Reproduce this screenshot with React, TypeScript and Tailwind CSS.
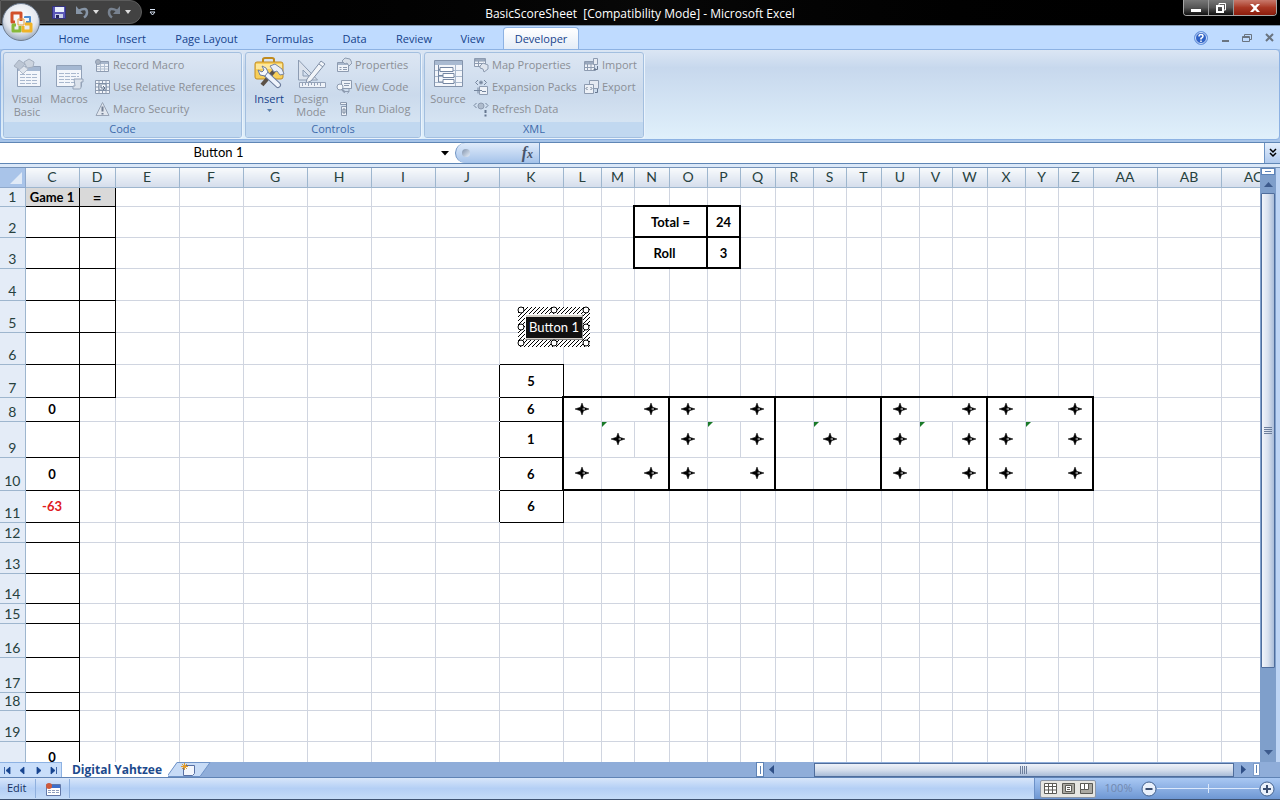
import type { ReactNode } from "react";
import { clsx } from "clsx";

const TABS = [
  { label: "Home", width: "w-[60px]" },
  { label: "Insert", width: "w-[54px]" },
  { label: "Page Layout", width: "w-[97px]" },
  { label: "Formulas", width: "w-[69px]" },
  { label: "Data", width: "w-[61px]" },
  { label: "Review", width: "w-[58px]" },
  { label: "View", width: "w-[59px]" },
];

const COLUMNS: [string, number][] = [
  ["C", 54], ["D", 36], ["E", 64], ["F", 64], ["G", 64], ["H", 64], ["I", 64], ["J", 64], ["K", 64],
  ["L", 38], ["M", 33], ["N", 35], ["O", 38], ["P", 33], ["Q", 35], ["R", 38], ["S", 33], ["T", 35],
  ["U", 38], ["V", 33], ["W", 35], ["X", 38], ["Y", 33], ["Z", 35], ["AA", 64], ["AB", 64], ["AC", 64],
];

const ROW_HEIGHTS = [19, 31, 31, 32, 32, 32, 33, 24, 36, 33, 32, 20, 31, 30, 20, 34, 35, 18, 31, 32];

const VALUES: Record<string, string> = {
  C1: "Game 1", D1: "=", C8: "0", C10: "0", C11: "-63", C20: "0",
  N2: "Total =", P2: "24", N3: "Roll", P3: "3",
  K7: "5", K8: "6", K9: "1", K10: "6", K11: "6",
};

const PIPS = new Set([
  "L8", "N8", "M9", "L10", "N10",
  "O8", "Q8", "O9", "Q9", "O10", "Q10",
  "S9",
  "U8", "W8", "U9", "W9", "U10", "W10",
  "X8", "Z8", "X9", "Z9", "X10", "Z10",
]);

const DICE_COLUMNS = "LMNOPQRSTUVWXYZ";

function isDieColumn(col: string) {
  return col.length === 1 && DICE_COLUMNS.includes(col);
}

function rightBorder(col: string, row: number) {
  if (col === "C" || (col === "D" && row <= 7)) return "border-r border-r-black";
  if (col === "J" && row >= 7 && row <= 11) return "border-r border-r-black";
  if (col === "K" && (row === 7 || row === 11)) return "border-r border-r-black";
  if (["K", "N", "Q", "T", "W", "Z"].includes(col) && row >= 8 && row <= 10) return "border-r-2 border-r-black";
  if (["M", "N", "P"].includes(col) && (row === 2 || row === 3)) return "border-r-2 border-r-black";
  if (["M", "P", "V", "Y"].includes(col) && (row === 8 || row === 10)) return "border-r-0";
  return "border-r border-r-[#d0d5e0]";
}

function bottomBorder(col: string, row: number) {
  if (col === "C" || (col === "D" && row <= 7)) return "border-b border-b-black";
  if (col === "K" && row >= 6 && row <= 11) return "border-b border-b-black";
  if (isDieColumn(col) && (row === 7 || row === 10)) return "border-b-2 border-b-black";
  if (["N", "O", "P"].includes(col) && row >= 1 && row <= 3) return "border-b-2 border-b-black";
  return "border-b border-b-[#d0d5e0]";
}

function Pip() {
  return (
    <svg className="mx-auto block" width="14" height="12" viewBox="0 0 14 12">
      <path d="M7 0 8.500 4.200 14 6 8.500 7.800 7 12 5.500 7.800 0 6 5.500 4.200Z" fill="#000" stroke="#000" strokeWidth=".5" />
      <path d="M7.600 5.500h2.400v1H7.600z" fill="#fff" />
    </svg>
  );
}

function Cell({ col, row }: { col: string; row: number }) {
  const id = `${col}${row}`;
  const merged = col === "N" && (row === 2 || row === 3);
  const flagged = row === 9 && ["M", "P", "S", "V", "Y"].includes(col);
  return (
    <td
      colSpan={merged ? 2 : 1}
      className={clsx(
        "relative p-0 text-center align-middle leading-4 font-bold whitespace-nowrap",
        rightBorder(col, row),
        bottomBorder(col, row),
        row === 1 && (col === "C" || col === "D") && "bg-[#d9d9d9]",
        row === 3 && col === "N" && "pr-3",
        id === "D1" ? "text-[15px]" : "text-[13px]",
        id === "C11" ? "text-[#e01b22]" : "text-black",
      )}
    >
      {flagged && <span className="absolute top-0 left-0 border-t-[5px] border-r-[5px] border-t-[#1a7a28] border-r-transparent" />}
      {PIPS.has(id) ? <Pip /> : VALUES[id]}
    </td>
  );
}

function Sheet() {
  return (
    <div className="relative h-[594px] min-w-0 flex-1 overflow-hidden bg-white">
      <table className="w-[1285px] table-fixed border-collapse font-[Lato,sans-serif]">
        <colgroup>
          <col className="w-[25px]" />
          {COLUMNS.map(([name, width]) => (
            <col key={name} style={{ width }} />
          ))}
        </colgroup>
        <thead>
          <tr className="h-[19px]">
            <th className="border-r border-b border-[#8fa9cc] bg-[#a9c4e9] p-0 align-bottom">
              <svg className="mb-[3px] ml-[10px] block" width="12" height="12" viewBox="0 0 12 12">
                <path d="M12 0v12H0z" fill="#e0eaf7" />
              </svg>
            </th>
            {COLUMNS.map(([name]) => (
              <th
                key={name}
                className="border-r border-b border-[#9eb6ce] bg-linear-to-b from-[#f8fafc] to-[#d5deec] p-0 text-[14px] leading-[18px] font-normal text-[#27413e]"
              >
                {name}
              </th>
            ))}
          </tr>
        </thead>
        <tbody>
          {ROW_HEIGHTS.map((height, i) => (
            <tr key={i} style={{ height }}>
              <th className="border-r border-b border-[#9eb6ce] bg-[#e4ecf7] p-0 pb-px align-bottom text-[14px] leading-4 font-normal text-[#27413e]">
                {i < 19 ? i + 1 : ""}
              </th>
              {COLUMNS.filter(([col]) => !(col === "O" && (i === 1 || i === 2))).map(([col]) => (
                <Cell key={col} col={col} row={i + 1} />
              ))}
            </tr>
          ))}
        </tbody>
      </table>
      <SelectedButton />
    </div>
  );
}

function SelectedButton() {
  const handles = [[4, 4], [37, 4], [69, 4], [4, 21], [69, 21], [4, 37], [37, 37], [69, 37]];
  return (
    <div className="absolute top-[138px] left-[517px] h-[42px] w-[74px]">
      <svg className="absolute inset-0" width="74" height="42">
        <defs>
          <pattern id="hatch" width="4" height="4" patternUnits="userSpaceOnUse">
            <path d="M-1 5 5-1M-1 1 1-1M3 5 5 3" stroke="#000" strokeWidth="1" />
          </pattern>
        </defs>
        <path d="M1 1h72v40H1zM8 8v26h58V8z" fill="#fff" fillRule="evenodd" />
        <path d="M1 1h72v40H1zM8 8v26h58V8z" fill="url(#hatch)" fillRule="evenodd" />
      </svg>
      <button className="absolute top-2 left-2 h-[26px] w-[58px] border border-t-white border-r-[#888] border-b-[#888] border-l-white bg-[#d4d0c8] font-[Lato,sans-serif] text-[13px] leading-5 whitespace-nowrap text-white">
        <span className="block h-[21px] bg-[#111]">Button 1</span>
      </button>
      <svg className="absolute inset-0" width="74" height="42">
        {handles.map(([x, y]) => (
          <circle key={`${x}-${y}`} cx={x} cy={y} r="3" fill="#fff" stroke="#000" />
        ))}
      </svg>
    </div>
  );
}

function SmallIcon({ children }: { children: ReactNode }) {
  return (
    <svg className="shrink-0" width="16" height="16" viewBox="0 0 16 16" fill="none" stroke="#8d9bb0">
      {children}
    </svg>
  );
}

function SmallButton({ icon, label }: { icon: ReactNode; label: string }) {
  return (
    <button className="flex h-[22px] items-center gap-[3px] text-[11px] leading-4 whitespace-nowrap text-[#8b8f96]">
      <SmallIcon>{icon}</SmallIcon>
      {label}
    </button>
  );
}

function BigButton({ icon, label, className }: { icon: ReactNode; label: ReactNode; className: string }) {
  return (
    <button className={clsx("flex shrink-0 flex-col items-center pt-[3px] text-[11px] leading-[13px]", className)}>
      <svg className="mb-[2px]" width="32" height="34" viewBox="0 0 32 34" fill="none">
        {icon}
      </svg>
      {label}
    </button>
  );
}

function Group({ title, className, children }: { title: string; className: string; children: ReactNode }) {
  return (
    <section
      className={clsx(
        "flex flex-col overflow-hidden rounded-[3px] border border-[#a3bfdf] bg-linear-to-b from-[#dce6f3] via-[#cbdaec] to-[#dbe9f6] shadow-[1px_1px_0_#eaf3fc]",
        className,
      )}
    >
      <div className="flex flex-1">{children}</div>
      <h2 className="h-[15px] bg-[#c1d8f0] text-center text-[11px] leading-[14px] text-[#3e6aaa]">{title}</h2>
    </section>
  );
}

const windowIcon = (
  <>
    <path d="M6.500 10.500h23v20h-23z" fill="#f3f6fb" stroke="#91a1b8" />
    <path d="M7 11h22v4H7z" fill="#a5b8d2" />
    <path d="M9 18.500h18M9 21.500h18M9 24.500h18M9 27.500h18" stroke="#a9b8ce" strokeDasharray="5 1" />
  </>
);

const visualBasicIcon = (
  <>
    {windowIcon}
    <path d="m3 10 5-6 6 4-5 6z" fill="#bcc6d4" stroke="#a5b0c0" />
    <path d="m13 6 5-3 5 3-1 5-6 1z" fill="#ccd4df" stroke="#a5b0c0" />
    <path d="m8 14 5-4 4 3-5 5z" fill="#dfe5ed" stroke="#b2bccb" />
  </>
);

const macrosIcon = (
  <>
    <path d="M3.500 9.500h25v21h-25z" fill="#f3f6fb" stroke="#91a1b8" />
    <path d="M4 10h24v4H4z" fill="#a5b8d2" />
    <path d="M6 17.500h20M6 20.500h20M6 23.500h20M6 26.500h20" stroke="#a9b8ce" strokeDasharray="5 1" />
    <path d="M21 23h9v3h-2v5c0 2-1 2-3 2h-5v-3h2z" fill="#dbe2ec" stroke="#95a3b8" />
  </>
);

const toolboxIcon = (
  <>
    <path d="M10 6V3.500Q10 2 12 2h7q2 0 2 1.500V6" stroke="#c08a1d" strokeWidth="2" />
    <path d="M2 8q0-2 2-2h24q2 0 2 2v13q0 2-2 2H4q-2 0-2-2z" fill="#f8cf59" stroke="#c18c24" />
    <path d="M3 8h26v5H3z" fill="#fde79b" />
    <path d="M21 15 9 29" stroke="#5b5147" strokeWidth="4" />
    <path d="m17 10 5-2 7 5 2 5-4 1-3-4-3 1z" fill="#e9eef7" stroke="#7885a1" />
    <path d="m12 17 13 12" stroke="#6c7c9c" strokeWidth="6" strokeLinecap="round" />
    <path d="m11 16 14 13" stroke="#eef3fb" strokeWidth="4" strokeLinecap="round" />
    <path d="m9 10 4 2 2 4-3 4-5-1-2-5 4 2 2-2z" fill="#f7f9fd" stroke="#6c7c9c" />
  </>
);

const designIcon = (
  <>
    <path d="M3.500 4v20h19zM8 14v6h6z" fill="#dce3ed" fillRule="evenodd" stroke="#8d9cb2" />
    <path d="M12 23 26 5l4 3-14 17-5 2z" fill="#f2f5f9" stroke="#8190a7" />
    <path d="m24 8 4 3" stroke="#8190a7" />
    <path d="M4.500 26.500h26v5h-26z" fill="#eef2f8" stroke="#94a2b8" />
    <path d="M7.500 27v3M10.500 27v2M13.500 27v3M16.500 27v2M19.500 27v3M22.500 27v2M25.500 27v3" stroke="#94a2b8" />
  </>
);

const sourceIcon = (
  <>
    <path d="M2.500 4.500h28v26h-28z" fill="#f2f5fa" stroke="#8393ab" />
    <path d="M3 5h27v4H3z" fill="#a9bad1" />
    <path d="M23.500 9v21M3 14.500h27M3 20.500h27M3 26.500h27" stroke="#a9b8cc" />
    <path d="M8 11.500h13v4H8zM11 17.500h11v4H11zM11 23.500h11v4H11z" fill="#fff" stroke="#7486a2" />
    <path d="M6.500 9v17H11M6.500 19.500H11M6.500 13.500H8" stroke="#7486a2" />
  </>
);

const sheetGlyph = (
  <>
    <path d="M2.500 4.500h12v10h-12z" fill="#eff3f9" />
    <path d="M3 5h11v2H3z" fill="#a8b7cc" stroke="none" />
    <path d="M3 9.500h11M3 12h11M6.500 7v7M10.500 7v7" stroke="#b1bfd1" />
  </>
);

const icons = {
  record: (
    <>
      {sheetGlyph}
      <circle cx="4" cy="5" r="2.500" fill="#a9b3c2" />
    </>
  ),
  relative: (
    <>
      <path d="M1.500 1.500h14v13h-14zM1 4.500h15M1 8h15M1 11.500h15M5 1v14M8.500 1v14M12 1v14" fill="#f2f5fa" />
      <path d="M5 5h7v6H5z" fill="#f8fafd" stroke="#74859d" />
      <path d="M7 6v3h4M9 7l2 2-2 2" stroke="#5f7089" />
    </>
  ),
  security: (
    <>
      <path d="M8.500 1.500 15 14.500H2z" fill="#dfe5ed" stroke="#98a4b6" />
      <path d="M8.500 5.500v5M8.500 12v1.500" stroke="#707d92" strokeWidth="2" />
    </>
  ),
  properties: (
    <>
      <path d="M1.500 5.500h11v9h-11z" fill="#eff3f9" />
      <path d="M2 6h10v2H2z" fill="#a8b7cc" stroke="none" />
      <path d="M3.500 10.500h2M7 10.500h4M3.500 12.500h2M7 12.500h4" />
      <path d="m6 4 3-3 5 1 2 4-3 3-2-3-2 1z" fill="#d7dfe9" />
    </>
  ),
  code: (
    <>
      <path d="M5.500 1.500h10v8h-10z" fill="#eef2f8" />
      <path d="M8 4.500h6M8 6.500h5M8 12.500h5l-1.500 2M13 10v2.500" />
      <circle cx="4" cy="8" r="3" fill="#f4f7fb" />
      <path d="m6 10.500 3 3" strokeWidth="2" />
    </>
  ),
  dialog: (
    <>
      <path d="M4.500 1.500h6v2h-6zM5.500 5.500h5v9h-5z" fill="#edf1f7" />
      <path d="M10.500 2v11M7 8h2v4H7z" stroke="#77879d" />
    </>
  ),
  map: (
    <>
      <path d="M1.500 1.500h11v8h-11z" fill="#eff3f9" />
      <path d="M2 2h10v2H2zM1 6.500h11M5.500 4v5" fill="#a8b7cc" />
      <path d="m7 9 3-3 5 2v4l-4 3-1-3-3-1z" fill="#dfe5ee" />
    </>
  ),
  expansion: (
    <>
      <path d="M5 1 2.500 3.500 5 6M11 1l2.500 2.500L11 6" stroke="#76879f" />
      <circle cx="8" cy="3.500" r="1.500" fill="#76879f" />
      <path d="M6.500 7.500h8v8h-8z" fill="#edf1f7" />
      <path d="M1 11.500h8M5 8.500v6M9 12.500h4" stroke="#74859d" />
    </>
  ),
  refresh: (
    <>
      <path d="M3.500 2 1 4.500 3.500 7M12.500 2 15 4.500 12.500 7" stroke="#76879f" />
      <circle cx="8" cy="5" r="3" fill="#afbccd" />
      <path d="M12.500 9v3M12.500 13.500v2" stroke="#65768f" strokeWidth="2" />
    </>
  ),
  importXml: (
    <>
      <path d="M1.500 4.500h10v9h-10z" fill="#eff3f9" />
      <path d="M2 5h9v2H2zM2 10.500h9M4.500 7v6M8 7v6" fill="#a8b7cc" />
      <path d="M10.500 1.500h4v6h-4z" fill="#e5eaf2" />
      <path d="M14.500 9v3.500H11M12.500 11 11 12.500l1.500 1.500" stroke="#66778f" />
    </>
  ),
  exportXml: (
    <>
      <path d="M6.500 1.500h9v8h-9z" fill="#e5eaf2" />
      <path d="M1.500 5.500h9v9h-9z" fill="#edf1f7" />
      <path d="M4.500 8 3 9.500 4.500 11M7.500 8 9 9.500 7.500 11M14.500 10v3.500H12" stroke="#66778f" />
    </>
  ),
};

function OfficeOrb() {
  return (
    <button aria-label="Office Button" className="absolute top-[2px] left-[1px] z-10">
      <svg width="40" height="40" viewBox="0 0 40 40" fill="none">
        <defs>
          <radialGradient id="orb" cx=".5" cy=".35" r=".65">
            <stop offset="0" stopColor="#fff" />
            <stop offset=".65" stopColor="#e3e7ee" />
            <stop offset="1" stopColor="#9aa9bd" />
          </radialGradient>
        </defs>
        <circle cx="20" cy="20" r="18.500" fill="url(#orb)" stroke="#6f7d90" />
        <g strokeWidth="3" strokeLinejoin="round">
          <path d="M14 20h-3v-9h9v8" stroke="#d2502a" />
          <path d="M24 16v-1h5v5h-4" stroke="#4d8dd0" strokeWidth="2" />
          <path d="M15 23h-3v6h7v-5" stroke="#87b93a" />
          <path d="M22 24v5h8v-7h-6" stroke="#f0b326" />
        </g>
        <path d="M17 17h6v6h-6z" stroke="#e6a03c" strokeWidth="1" />
      </svg>
    </button>
  );
}

function TitleBar() {
  return (
    <header className="flex h-[25px] items-start justify-between bg-linear-to-r from-black via-[#080808] to-black">
      <div className="flex w-[242px] items-center">
        <div className="flex h-6 w-[142px] items-center gap-[8px] rounded-r-full border border-[#5c5c5c] bg-[#424242] pl-[50px]">
          <button aria-label="Save">
            <svg className="block" width="16" height="16" viewBox="0 0 16 16">
              <path d="M1.500 2.500h13v12h-13z" fill="#5a57b8" stroke="#34327d" />
              <path d="M4 3h9v5H4z" fill="#e9f0fc" />
              <path d="M4 10h8v4H4z" fill="#c8cfe8" />
              <path d="M5 11h3v3H5z" fill="#27265f" />
            </svg>
          </button>
          <button aria-label="Undo" className="flex items-center gap-1">
            <svg width="14" height="14" viewBox="0 0 14 14">
              <path d="M4 5.500q8-4 8 2 0 3-3 5" fill="none" stroke="#8795a6" strokeWidth="2.500" />
              <path d="M1 1v8h7z" fill="#8795a6" />
            </svg>
            <svg width="6" height="4" viewBox="0 0 6 4"><path d="M0 0h6L3 4z" fill="#ddd" /></svg>
          </button>
          <button aria-label="Redo" className="flex items-center gap-1">
            <svg width="14" height="14" viewBox="0 0 14 14">
              <path d="M10 5.500q-8-4-8 2 0 3 3 5" fill="none" stroke="#78828f" strokeWidth="2.500" />
              <path d="M13 1v8H6z" fill="#78828f" />
            </svg>
            <svg width="6" height="4" viewBox="0 0 6 4"><path d="M0 0h6L3 4z" fill="#ddd" /></svg>
          </button>
        </div>
        <button aria-label="Customize Quick Access Toolbar" className="ml-[7px]">
          <svg className="block" width="7" height="7" viewBox="0 0 7 7">
            <path d="M1 .5h5M1 3h5L3.500 6z" fill="none" stroke="#d8e4f5" />
          </svg>
        </button>
      </div>
      <h1 className="pt-[6px] text-[12px] leading-4 whitespace-pre text-white">
        BasicScoreSheet  [Compatibility Mode] - Microsoft Excel
      </h1>
      <div className="flex w-[242px] justify-end pr-[3px]">
        <div className="flex h-4 overflow-hidden rounded-b-[4px] border border-t-0 border-[#a6a6a6]">
          <button aria-label="Minimize" className="flex w-[25px] items-center justify-center border-r border-[#999] bg-linear-to-b from-[#777] via-[#555] to-[#111]">
            <svg width="12" height="10" viewBox="0 0 12 10"><path d="M1 6h10v3H1z" fill="#fff" /></svg>
          </button>
          <button aria-label="Restore" className="flex w-[25px] items-center justify-center border-r border-[#999] bg-linear-to-b from-[#777] via-[#555] to-[#111]">
            <svg width="12" height="12" viewBox="0 0 12 12" fill="none" stroke="#fff">
              <path d="M4 3V1.500h6.500V8H9" />
              <path d="M2 4h6v6H2z" strokeWidth="2" />
            </svg>
          </button>
          <button aria-label="Close" className="flex w-[42px] items-center justify-center bg-linear-to-b from-[#c8796b] via-[#a93824] to-[#8c1c0c]">
            <svg width="12" height="10" viewBox="0 0 12 10"><path d="M1 1h3l2 2 2-2h3L7.500 5 11 9H8L6 7 4 9H1l3.500-4z" fill="#fff" /></svg>
          </button>
        </div>
      </div>
    </header>
  );
}

function TabStrip() {
  return (
    <nav className="flex h-6 items-end border-t border-[#7f93a8] bg-[#bfdbff] pl-11 text-[11px] text-[#15428b]">
      <div className="flex">
        {TABS.map((tab) => (
          <button key={tab.label} className={clsx("h-[20px] text-center leading-4 whitespace-nowrap", tab.width)}>
            {tab.label}
          </button>
        ))}
      </div>
      <button className="-mb-px ml-[1px] h-[23px] w-[76px] rounded-t-[4px] border border-b-0 border-[#8db2e3] bg-linear-to-b from-white to-[#e3ecf7] leading-4">
        Developer
      </button>
      <div className="ml-auto flex items-center gap-[13px] self-center pr-[6px]">
        <button aria-label="Help">
          <svg className="block" width="14" height="14" viewBox="0 0 14 14">
            <circle cx="7" cy="7" r="6.500" fill="#2f62c6" stroke="#6f9be0" />
            <circle cx="7" cy="7" r="5.500" fill="none" stroke="#cfe0fa" />
            <path d="M5 5.500q0-2 2-2t2 1.700Q9 6.500 7 7.500v1M7 9.500V11" fill="none" stroke="#fff" strokeWidth="1.500" />
          </svg>
        </button>
        <button aria-label="Minimize workbook">
          <svg className="block" width="8" height="10" viewBox="0 0 8 10"><path d="M1 7h7v2H1z" fill="#6a7480" /></svg>
        </button>
        <button aria-label="Restore workbook">
          <svg className="block" width="10" height="8" viewBox="0 0 10 8" fill="none" stroke="#6a7480">
            <path d="M2.500 2V.5h7v5H8M.5 2.500h7v5h-7zM.5 3.500h7" />
          </svg>
        </button>
        <button aria-label="Close workbook">
          <svg className="block" width="9" height="9" viewBox="0 0 9 9"><path d="m1 1 7 7M8 1 1 8" stroke="#6a7480" strokeWidth="2" /></svg>
        </button>
      </div>
    </nav>
  );
}

function Ribbon() {
  return (
    <div className="flex h-[91px] gap-[3px] rounded-[4px] border border-[#8db2e3] bg-linear-to-b from-[#dbe6f4] from-0% via-[#c7d8ed] via-20% to-[#e0f0fb] px-[2px] pt-[2px] pb-px">
      <Group title="Code" className="w-[239px]">
        <BigButton className="w-[46px] text-[#8b8f96]" icon={visualBasicIcon} label={<>Visual<br />Basic</>} />
        <BigButton className="w-[38px] text-[#8b8f96]" icon={macrosIcon} label="Macros" />
        <div className="ml-[6px] pt-px">
          <SmallButton icon={icons.record} label="Record Macro" />
          <SmallButton icon={icons.relative} label="Use Relative References" />
          <SmallButton icon={icons.security} label="Macro Security" />
        </div>
      </Group>
      <Group title="Controls" className="w-[176px]">
        <BigButton
          className="w-[46px] text-[#15428b]"
          icon={toolboxIcon}
          label={
            <>
              Insert
              <svg className="mt-1" width="5" height="3" viewBox="0 0 5 3"><path d="M0 0h5L2.500 3z" fill="#567db1" /></svg>
            </>
          }
        />
        <BigButton className="w-[38px] text-[#8b8f96]" icon={designIcon} label={<>Design<br />Mode</>} />
        <div className="ml-[6px] pt-px">
          <SmallButton icon={icons.properties} label="Properties" />
          <SmallButton icon={icons.code} label="View Code" />
          <SmallButton icon={icons.dialog} label="Run Dialog" />
        </div>
      </Group>
      <Group title="XML" className="w-[220px]">
        <BigButton className="w-[46px] text-[#8b8f96]" icon={sourceIcon} label="Source" />
        <div className="ml-[2px] w-[104px] pt-px">
          <SmallButton icon={icons.map} label="Map Properties" />
          <SmallButton icon={icons.expansion} label="Expansion Packs" />
          <SmallButton icon={icons.refresh} label="Refresh Data" />
        </div>
        <div className="ml-[6px] pt-px">
          <SmallButton icon={icons.importXml} label="Import" />
          <SmallButton icon={icons.exportXml} label="Export" />
        </div>
      </Group>
    </div>
  );
}

function FormulaBar() {
  return (
    <div className="mt-[2px] flex h-[26px] border-b border-[#7592b8] bg-[#dbe8f8] pb-[3px]">
      <div className="flex flex-1 border-y border-[#5f86b5] bg-white">
        <input
          aria-label="Name Box"
          defaultValue="Button 1"
          className="w-[437px] bg-transparent text-center font-[Lato,sans-serif] text-[13px] text-black outline-none"
        />
        <button aria-label="Names" className="flex w-[18px] items-center pl-1">
          <svg width="8" height="5" viewBox="0 0 8 5"><path d="M0 0h8L4 4.500z" fill="#000" /></svg>
        </button>
        <div className="flex w-[85px] items-center justify-between rounded-l-full border-r border-l border-[#6d93c3] bg-linear-to-b from-[#e0ebfa] to-[#a5c3ea] pr-[6px] pl-[6px]">
          <span className="size-2 rounded-full bg-linear-to-br from-[#8294ad] to-[#e8f0fb]" />
          <button aria-label="Insert Function" className="font-['Liberation_Serif',serif] text-[16px] leading-4 font-bold text-[#46536a] italic">
            f<span className="text-[12px]">x</span>
          </button>
        </div>
        <input aria-label="Formula" className="min-w-0 flex-1 bg-white outline-none" />
        <button aria-label="Expand Formula Bar" className="flex w-4 items-center justify-center border-l border-[#6d93c3] bg-linear-to-b from-[#e5effc] to-[#b0caee]">
          <svg width="8" height="10" viewBox="0 0 8 10" fill="none" stroke="#000" strokeWidth="1.500">
            <path d="m1 1 3 3 3-3M1 5l3 3 3-3" />
          </svg>
        </button>
      </div>
    </div>
  );
}

function VerticalScrollbar() {
  return (
    <div className="flex w-5 border-r-4 border-[#bdd4f4] bg-[#7f9fcb]">
      <div className="flex w-full flex-col items-center">
        <div className="h-[7px] w-[14px] border border-[#5d83b8] bg-white"><div className="mx-[3px] mt-[2px] h-px bg-[#5d83b8]" /></div>
        <button aria-label="Scroll up" className="h-[18px]">
          <svg width="9" height="5" viewBox="0 0 9 5"><path d="M0 5h9L4.500 0z" fill="#3d5b8d" /></svg>
        </button>
        <div className="flex h-[475px] w-[14px] items-center justify-center rounded-[1px] border border-[#4f6d9c] bg-linear-to-r from-[#f1f4fa] via-[#d9e1ee] to-[#a9bcd8]">
          <svg width="8" height="8" viewBox="0 0 8 8"><path d="M0 .5h8M0 2.500h8M0 4.500h8M0 6.500h8" stroke="#6d7f9c" /></svg>
        </div>
        <button aria-label="Scroll down" className="mt-auto mb-[6px] h-[7px]">
          <svg className="block" width="9" height="5" viewBox="0 0 9 5"><path d="M0 0h9L4.500 5z" fill="#3d5b8d" /></svg>
        </button>
      </div>
    </div>
  );
}

function SheetTabs() {
  const arrows = [
    ["First sheet", "M1.500 1v7M7 1v7L3 4.500z"],
    ["Previous sheet", "M6 1v7L2 4.500z"],
    ["Next sheet", "M3 1v7l4-3.500z"],
    ["Last sheet", "M7.500 1v7M2 1v7l4-3.500z"],
  ];
  return (
    <div className="flex h-[16px] border-b border-[#5f83b5] bg-[#8fadd9]">
      <div className="flex w-[62px] items-center justify-around border-t border-r border-[#8db2e3] bg-[#c9defa]">
        {arrows.map(([label, d]) => (
          <button key={label} aria-label={label}>
            <svg className="block" width="9" height="9" viewBox="0 0 9 9"><path d={d} fill="#17448f" stroke="#17448f" strokeWidth=".8" /></svg>
          </button>
        ))}
      </div>
      <button className="w-[110px] bg-white text-center text-[12px] leading-[14px] font-bold whitespace-nowrap text-[#1c4a8d]">
        Digital Yahtzee
      </button>
      <button aria-label="Insert Worksheet" className="-ml-1">
        <svg className="block" width="44" height="15" viewBox="0 0 44 15">
          <path d="M0 0h9L0 14z" fill="#fff" />
          <path d="M-1 14.500 9 .5h33l-10 14z" fill="#c7dbf6" stroke="#6f93c7" />
          <path d="M15.500 3.500h11v8l-2 2h-9z" fill="#f3f6fc" stroke="#5870a4" />
          <path d="M16.500 1v7M13 4.500h7M14 2l5 5M19 2l-5 5" stroke="#e59c28" />
        </svg>
      </button>
      <div className="ml-auto flex w-[524px] items-center">
        <span className="h-full w-2 border border-[#5f83b5] bg-white"><span className="mx-auto mt-[3px] block h-2 w-px bg-[#5f83b5]" /></span>
        <button aria-label="Scroll left" className="ml-[5px]">
          <svg className="block" width="5" height="9" viewBox="0 0 5 9"><path d="M5 0v9L0 4.500z" fill="#2f4f86" /></svg>
        </button>
        <div className="ml-[40px] flex h-[14px] w-[420px] items-center justify-center border border-[#4f6d9c] bg-linear-to-b from-[#eef2f9] via-[#d5deec] to-[#a9bcd8]">
          <svg width="8" height="8" viewBox="0 0 8 8"><path d="M.5 0v8M2.500 0v8M4.500 0v8M6.500 0v8" stroke="#6d7f9c" /></svg>
        </div>
        <button aria-label="Scroll right" className="ml-[7px]">
          <svg className="block" width="5" height="9" viewBox="0 0 5 9"><path d="M0 0v9l5-4.500z" fill="#2f4f86" /></svg>
        </button>
        <span className="ml-[7px] h-[13px] w-[7px] border border-[#7d9cc9] bg-white"><span className="mx-auto mt-px block h-2 w-px bg-[#5f83b5]" /></span>
      </div>
    </div>
  );
}

function ZoomButton({ label, d }: { label: string; d: string }) {
  return (
    <button aria-label={label}>
      <svg className="block" width="16" height="16" viewBox="0 0 16 16">
        <circle cx="8" cy="8" r="7" fill="#e9f0fb" stroke="#42618f" />
        <path d={d} stroke="#3b4e70" strokeWidth="2" />
      </svg>
    </button>
  );
}

function StatusBar() {
  return (
    <footer className="flex h-[23px] items-center border-b-2 border-[#3f5372] bg-linear-to-b from-[#d8e6fa] via-[#b4cff5] to-[#c5dcf8] text-[11px] text-[#15305f]">
      <span className="w-[35px] pl-[7px]">Edit</span>
      <button aria-label="Record Macro" className="flex h-[19px] w-[35px] items-center justify-center border-x border-[#8fb0de]">
        <svg width="16" height="14" viewBox="0 0 16 14">
          <path d="M1.500 2.500h14v11h-14z" fill="#fff" stroke="#6278a8" />
          <path d="M2 3h13v3H2z" fill="#3d6fca" />
          <path d="M3 8.500h11M3 10.500h11" stroke="#8d9dbd" strokeDasharray="3 1" />
          <circle cx="4" cy="4" r="3" fill="#cf5a3c" />
        </svg>
      </button>
      <div className="ml-auto flex h-full w-[246px] items-center border-l border-[#6c91c8] bg-linear-to-b from-[#a9c8f3] to-[#6e97d3] pl-[5px]">
        <div className="flex h-[18px] w-14 items-center justify-around rounded-[2px] border border-[#8a96a8] bg-[#e6e6e2]">
          <button aria-label="Normal">
            <svg className="block" width="13" height="11" viewBox="0 0 13 11"><path d="M.5.5h12v10H.5zM.5 3.500h12M.5 7h12M4.500.5v10M8.500.5v10" fill="#fff" stroke="#5a5a55" /></svg>
          </button>
          <button aria-label="Page Layout View">
            <svg className="block" width="13" height="11" viewBox="0 0 13 11"><path d="M.5.5h12v10H.5z" fill="#aaa9a2" stroke="#5a5a55" /><path d="M3.500 2.500h6v6h-6zM5 4.500h3M5 6.500h3" fill="#fff" stroke="#5a5a55" /></svg>
          </button>
          <button aria-label="Page Break Preview">
            <svg className="block" width="13" height="11" viewBox="0 0 13 11"><path d="M.5.5h12v10H.5z" fill="#aaa9a2" stroke="#5a5a55" /><path d="M.5.5h4v6h-4zM4.500.5h4v6h-4z" fill="#fff" stroke="#5a5a55" /></svg>
          </button>
        </div>
        <span className="w-[45px] text-center text-[#7088b0]">100%</span>
        <ZoomButton label="Zoom out" d="M4.500 8h7" />
        <div className="flex h-[9px] flex-1 items-center">
          <span className="h-px flex-1 bg-[#dbe8fb]" />
          <span className="h-[9px] w-px bg-[#dbe8fb]" />
          <span className="h-px flex-1 bg-[#dbe8fb]" />
        </div>
        <ZoomButton label="Zoom in" d="M4 8h8M8 4v8" />
        <span className="w-[5px]" />
      </div>
    </footer>
  );
}

export default function App() {
  return (
    <div className="relative flex min-h-screen flex-col overflow-hidden bg-[#a7c4e8] font-['Open_Sans',sans-serif]">
      <OfficeOrb />
      <TitleBar />
      <TabStrip />
      <Ribbon />
      <FormulaBar />
      <main className="flex">
        <Sheet />
        <VerticalScrollbar />
      </main>
      <SheetTabs />
      <StatusBar />
    </div>
  );
}
